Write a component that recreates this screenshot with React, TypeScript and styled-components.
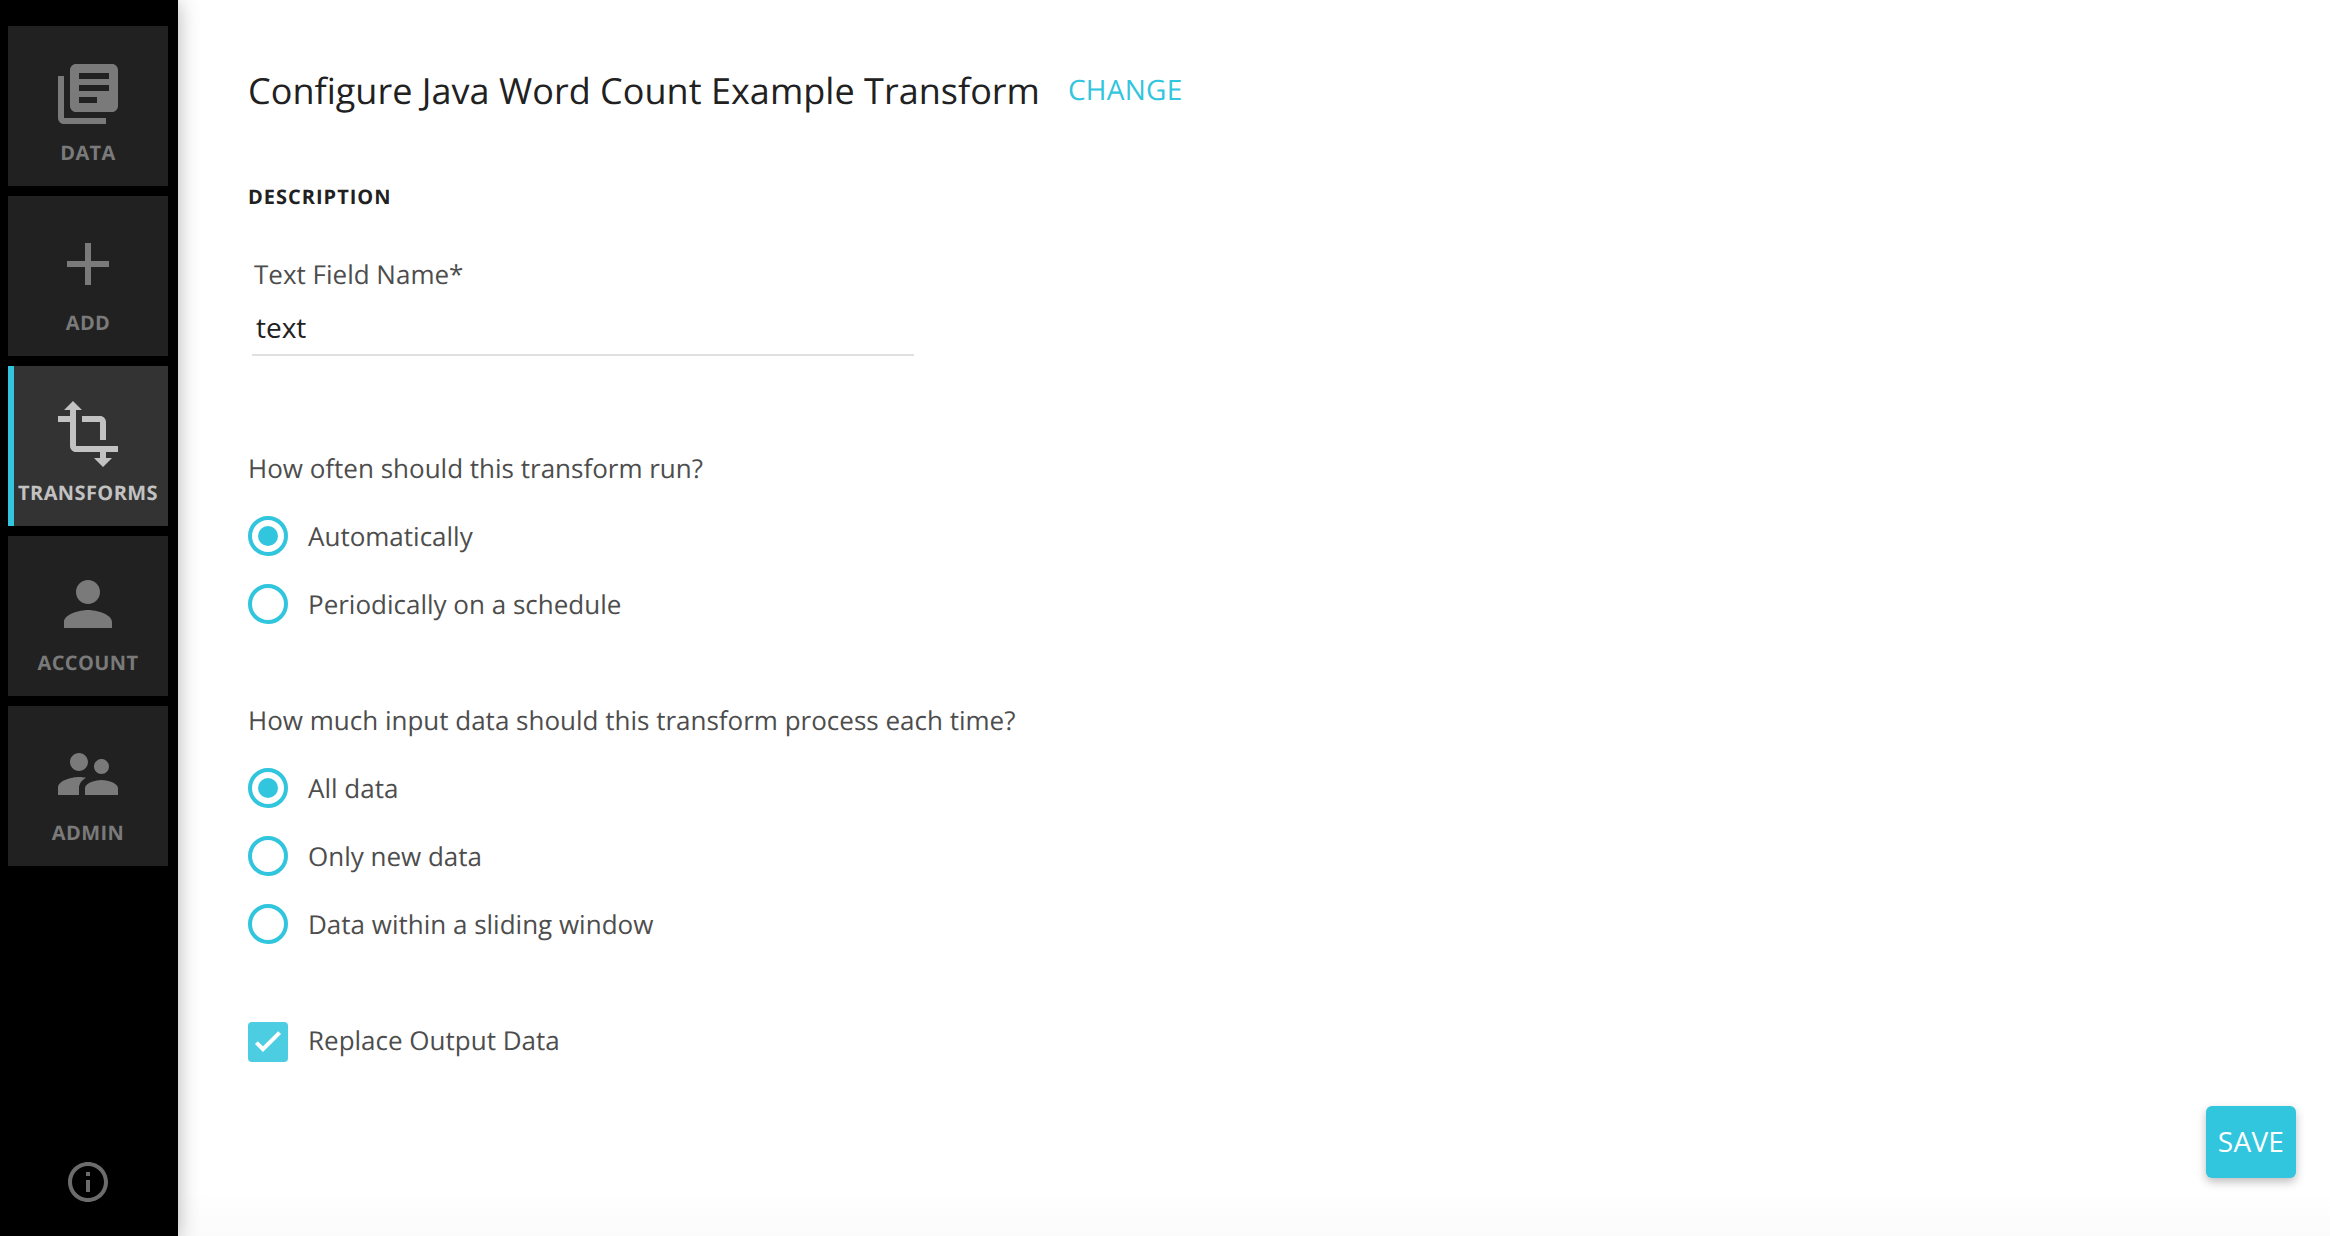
import React, { useState } from 'react';
import styled, { createGlobalStyle } from 'styled-components';

const cyan = '#31c5de';

const GlobalStyle = createGlobalStyle`
  *, *::before, *::after { box-sizing: border-box; }
  body {
    margin: 0;
    background: #fff;
    font-family: "Open Sans", "Noto Sans", sans-serif;
    text-rendering: geometricPrecision;
  }
`;

const Page = styled.div`
  display: flex;
  width: 100%;
  height: 100vh;
  overflow: hidden;
`;

const Sidebar = styled.nav`
  z-index: 1;
  display: flex;
  flex-direction: column;
  flex: none;
  gap: 10px;
  width: 178px;
  padding: 26px 10px 30px 8px;
  background: #000;
  box-shadow: 0 2px 20px rgba(0, 0, 0, 0.3);
`;

const NavTile = styled.a<{ $active: boolean }>`
  display: flex;
  flex-direction: column;
  align-items: center;
  flex: none;
  width: 160px;
  height: 160px;
  padding-top: 32px;
  color: ${(p) => (p.$active ? '#c2c2c2' : '#7a7a7a')};
  background: ${(p) => (p.$active ? '#333' : '#212121')};
  box-shadow: ${(p) => (p.$active ? `inset 6px 0 0 ${cyan}` : 'none')};
`;

const NavIcon = styled.svg`
  width: 72px;
  height: 72px;
  fill: currentColor;
`;

const NavLabel = styled.span`
  margin-top: 9px;
  font-size: 20px;
  font-weight: 700;
  line-height: 28px;
  letter-spacing: 0.4px;
  white-space: nowrap;
`;

const InfoLink = styled.a`
  display: flex;
  justify-content: center;
  width: 160px;
  margin-top: auto;
  color: #6c6c6c;
`;

const InfoIcon = styled.svg`
  width: 48px;
  height: 48px;
  fill: currentColor;
`;

const Main = styled.main`
  display: flex;
  flex: 1;
  justify-content: space-between;
  align-items: flex-end;
  padding: 64px 34px 58px 70px;
  background: linear-gradient(#fff calc(100% - 44px), #fbfbfb);
`;

const Form = styled.form`
  display: flex;
  flex-direction: column;
  align-self: flex-start;
`;

const Header = styled.header`
  display: flex;
  align-items: flex-start;
  gap: 28px;
`;

const Title = styled.h1`
  margin: 0;
  color: #212121;
  font-size: 36px;
  font-weight: 400;
  line-height: 54px;
  letter-spacing: 0.03px;
`;

const ChangeLink = styled.a`
  color: ${cyan};
  font-size: 28px;
  line-height: 52px;
  letter-spacing: 0.01em;
`;

const SectionTitle = styled.h2`
  margin: 65px 0 45px;
  color: #212121;
  font-size: 20px;
  font-weight: 700;
  line-height: 28px;
  letter-spacing: 1px;
`;

const Field = styled.label`
  display: flex;
  flex-direction: column;
  gap: 16px;
  width: 662px;
  margin-left: 4px;
`;

const FieldLabel = styled.span`
  padding-left: 2px;
  color: #4d4d4d;
  font-size: 26px;
  line-height: 36px;
`;

const TextInput = styled.input`
  width: 100%;
  height: 48px;
  padding: 0 4px 8px;
  border: 0;
  border-bottom: 2px solid #e0e0e0;
  outline: none;
  color: #212121;
  background: transparent;
  font: 400 28px/38px "Open Sans", "Noto Sans", sans-serif;
`;

const Question = styled.fieldset<{ $gap: number }>`
  display: flex;
  flex-direction: column;
  gap: 28px;
  min-width: 0;
  margin: ${(p) => p.$gap}px 0 0;
  padding: 0;
  border: 0;
`;

const QuestionText = styled.p`
  margin: 0 0 2px;
  color: #4d4d4d;
  font-size: 26px;
  line-height: 36px;
`;

const Option = styled.div`
  display: flex;
  align-items: center;
  gap: 20px;
  height: 40px;
  cursor: pointer;
`;

const OptionText = styled.span`
  color: #4d4d4d;
  font-size: 26px;
  line-height: 40px;
`;

const Radio = styled.span<{ $checked: boolean }>`
  display: grid;
  place-items: center;
  width: 40px;
  height: 40px;
  border: 4px solid ${cyan};
  border-radius: 50%;

  &::after {
    content: "";
    width: 20px;
    height: 20px;
    border-radius: 50%;
    background: ${(p) => (p.$checked ? cyan : 'transparent')};
  }
`;

const CheckRow = styled(Option)`
  align-items: flex-start;
  margin-top: 78px;

  ${OptionText} { line-height: 36px; }
`;

const Checkbox = styled.span<{ $checked: boolean }>`
  width: 40px;
  height: 40px;
  border-radius: 4px;
  background: ${(p) => (p.$checked ? '#4dcde2' : '#bdbdbd')};
`;

const CheckMark = styled.svg`
  display: block;
  fill: none;
  stroke: #fff;
  stroke-width: 4;
`;

const SaveButton = styled.button`
  width: 90px;
  height: 72px;
  padding: 0 0 2px;
  border: 0;
  border-radius: 6px;
  color: #fff;
  background: ${cyan};
  box-shadow: 0 4px 10px rgba(0, 0, 0, 0.26);
  font: 400 28px/70px "Open Sans", "Noto Sans", sans-serif;
  letter-spacing: 0.01em;
`;

const navItems = [
  {
    label: 'DATA',
    path: 'M4 6H2v14c0 1.1.9 2 2 2h14v-2H4V6zm16-4H8c-1.1 0-2 .9-2 2v12c0 1.1.9 2 2 2h12c1.1 0 2-.9 2-2V4c0-1.1-.9-2-2-2zm-1 9H9V9h10v2zm-4 4H9v-2h6v2zm4-8H9V5h10v2z',
  },
  { label: 'ADD', path: 'M19 13h-6v6h-2v-6H5v-2h6V5h2v6h6v2z' },
  {
    label: 'TRANSFORMS',
    path: 'M22 18v-2H8V4h2L7 1 4 4h2v2H2v2h4v8c0 1.1.9 2 2 2h8v2h-2l3 3 3-3h-2v-2h4zM10 8h6v6h2V8c0-1.1-.9-2-2-2h-6v2z',
  },
  {
    label: 'ACCOUNT',
    path: 'M12 12c2.21 0 4-1.79 4-4s-1.79-4-4-4-4 1.79-4 4 1.79 4 4 4zm0 2c-2.67 0-8 1.34-8 4v2h16v-2c0-2.66-5.33-4-8-4z',
  },
  {
    label: 'ADMIN',
    path: 'M16.5 12c1.38 0 2.49-1.12 2.49-2.5S17.88 7 16.5 7C15.12 7 14 8.12 14 9.5s1.12 2.5 2.5 2.5zM9 11c1.66 0 2.99-1.34 2.99-3S10.66 5 9 5C7.34 5 6 6.34 6 8s1.34 3 3 3zm7.5 3c-1.83 0-5.5.92-5.5 2.75V19h11v-2.25c0-1.83-3.67-2.75-5.5-2.75zM9 13c-2.33 0-7 1.17-7 3.5V19h7v-2.25c0-.85.33-2.34 2.37-3.47C10.5 13.1 9.66 13 9 13z',
  },
];

interface RadioGroupProps {
  question: string;
  options: string[];
  gap: number;
}

function RadioGroup({ question, options, gap }: RadioGroupProps) {
  const [selected, setSelected] = useState(options[0]);
  return (
    <Question $gap={gap} role="radiogroup">
      <QuestionText>{question}</QuestionText>
      {options.map((option) => (
        <Option
          key={option}
          role="radio"
          aria-checked={option === selected}
          onClick={() => setSelected(option)}
        >
          <Radio $checked={option === selected} />
          <OptionText>{option}</OptionText>
        </Option>
      ))}
    </Question>
  );
}

export default function App() {
  const [fieldName, setFieldName] = useState('text');
  const [replace, setReplace] = useState(true);

  return (
    <>
      <GlobalStyle />
      <Page>
        <Sidebar>
          {navItems.map(({ label, path }) => (
            <NavTile key={label} $active={label === 'TRANSFORMS'}>
              <NavIcon viewBox="0 0 24 24">
                <path d={path} />
              </NavIcon>
              <NavLabel>{label}</NavLabel>
            </NavTile>
          ))}
          <InfoLink>
            <InfoIcon viewBox="0 0 24 24">
              <path d="M11 17h2v-6h-2v6zm1-15C6.48 2 2 6.48 2 12s4.48 10 10 10 10-4.48 10-10S17.52 2 12 2zm0 18c-4.41 0-8-3.59-8-8s3.59-8 8-8 8 3.59 8 8-3.59 8-8 8zM11 9h2V7h-2v2z" />
            </InfoIcon>
          </InfoLink>
        </Sidebar>
        <Main>
          <Form>
            <Header>
              <Title>Configure Java Word Count Example Transform</Title>
              <ChangeLink>CHANGE</ChangeLink>
            </Header>
            <SectionTitle>DESCRIPTION</SectionTitle>
            <Field>
              <FieldLabel>Text Field Name*</FieldLabel>
              <TextInput value={fieldName} onChange={(e) => setFieldName(e.target.value)} />
            </Field>
            <RadioGroup
              gap={94}
              question="How often should this transform run?"
              options={['Automatically', 'Periodically on a schedule']}
            />
            <RadioGroup
              gap={78}
              question="How much input data should this transform process each time?"
              options={['All data', 'Only new data', 'Data within a sliding window']}
            />
            <CheckRow role="checkbox" aria-checked={replace} onClick={() => setReplace(!replace)}>
              <Checkbox $checked={replace}>
                {replace && (
                  <CheckMark width="40" height="40" viewBox="0 0 40 40">
                    <polyline points="8.4,20.6 15,27.2 31.6,10.6" />
                  </CheckMark>
                )}
              </Checkbox>
              <OptionText>Replace Output Data</OptionText>
            </CheckRow>
          </Form>
          <SaveButton type="button">SAVE</SaveButton>
        </Main>
      </Page>
    </>
  );
}
